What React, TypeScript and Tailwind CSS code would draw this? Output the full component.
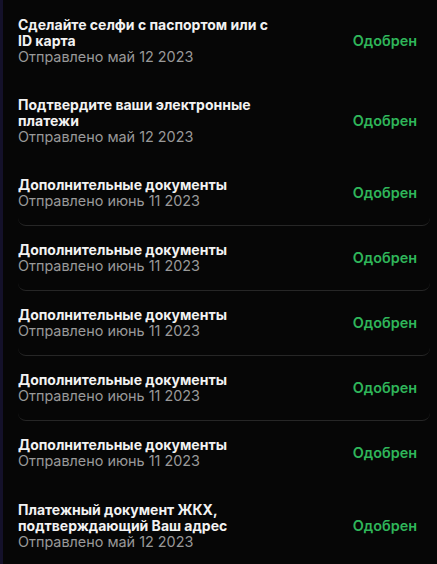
import React from "react";

type Doc = {
    title: string[];
    date: string;
    bordered?: boolean;
};

const docs: Doc[] = [
    { title: ["Сделайте селфи с паспортом или с", "ID карта"], date: "Отправлено май 12 2023" },
    { title: ["Подтвердите ваши электронные", "платежи"], date: "Отправлено май 12 2023" },
    { title: ["Дополнительные документы"], date: "Отправлено июнь 11 2023", bordered: true },
    { title: ["Дополнительные документы"], date: "Отправлено июнь 11 2023", bordered: true },
    { title: ["Дополнительные документы"], date: "Отправлено июнь 11 2023", bordered: true },
    { title: ["Дополнительные документы"], date: "Отправлено июнь 11 2023", bordered: true },
    { title: ["Дополнительные документы"], date: "Отправлено июнь 11 2023" },
    { title: ["Платежный документ ЖКХ,", "подтверждающий Ваш адрес"], date: "Отправлено май 12 2023" },
];

export default function App() {
    return (
        <div
            className="flex h-[564px] w-[437px] overflow-hidden bg-[#060606]"
            style={{ fontFamily: "Inter, 'Noto Sans', sans-serif" }}
        >
            {/* thin sidebar edge */}
            <div className="w-[3px] shrink-0 bg-[#14112a]" />

            <div className="flex flex-1 flex-col pt-px pl-[15px] pr-[7px]">
                {docs.map((doc, i) => (
                    <div
                        key={i}
                        className={`flex items-center justify-between rounded-b-lg border-b pt-4 pr-[13px] ${
                            doc.title.length > 1 ? "pb-[15px]" : "pb-4"
                        } ${doc.bordered ? "border-[#262626]" : "border-transparent"}`}
                    >
                        <div className="flex flex-col">
                            <div className="text-[14px] font-bold leading-4 text-[#f2f2f2]">
                                {doc.title.map((line, j) => (
                                    <div key={j}>{line}</div>
                                ))}
                            </div>
                            <div className="text-[14.4px] leading-4 text-[#999999]">{doc.date}</div>
                        </div>
                        <span className="text-[14.4px] font-semibold text-[#2fb65a]">Одобрен</span>
                    </div>
                ))}
            </div>
        </div>
    );
}
